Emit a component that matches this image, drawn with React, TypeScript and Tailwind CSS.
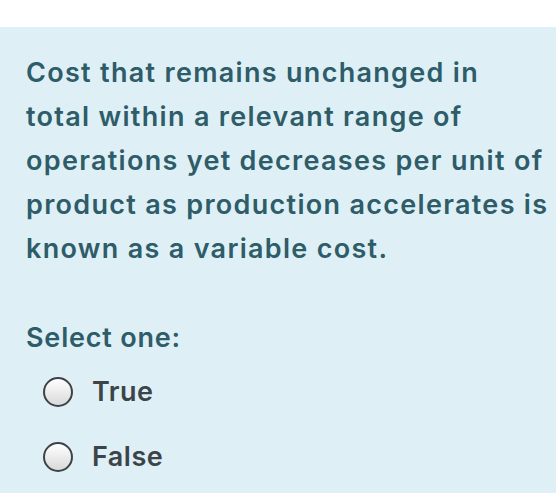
export default function App() {
  const options = ['True', 'False'];
  return (
    <div className="w-[556px] h-[493px] bg-white font-['Inter',sans-serif]">
      <div className="h-[27px] bg-white" />
      <div className="h-[466px] bg-[#def0f6] px-[26px] pt-[24px]">
        <p className="text-[27px] leading-[44px] font-semibold tracking-[1.3px] text-[#2e5c68] whitespace-nowrap">
          Cost that remains unchanged in<br />
          total within a relevant range of<br />
          operations yet decreases per unit of<br />
          product as production accelerates is<br />
          known as a variable cost.
        </p>
        <div className="mt-[45px] text-[27px] leading-[44px] font-semibold tracking-[0.8px] text-[#2e5c68]">Select one:</div>
        <div className="mt-[10px] flex flex-col gap-[21px] pl-[17px]">
          {options.map((o) => (
            <label key={o} className="flex items-center h-[44px]">
              <span className="w-[30px] h-[30px] rounded-full border-2 border-[#3c4347] bg-gradient-to-b from-white to-[#d9d9d9]" />
              <span className="ml-[19px] text-[27px] font-semibold tracking-[0.5px] text-[#3c4449]">{o}</span>
            </label>
          ))}
        </div>
      </div>
    </div>
  );
}
